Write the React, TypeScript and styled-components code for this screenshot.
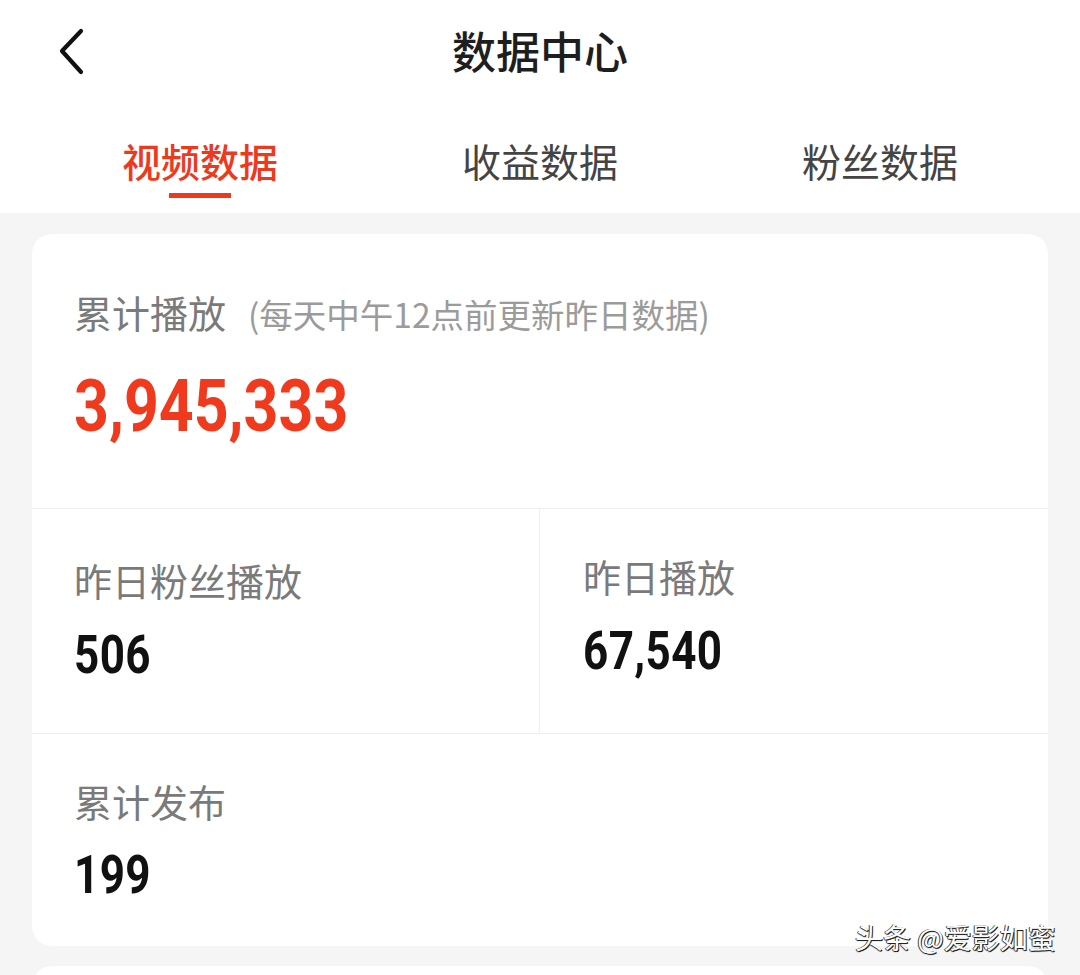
import React from "react";
import styled, { createGlobalStyle } from "styled-components";

const GlobalStyle = createGlobalStyle`
  html, body {
    margin: 0;
    padding: 0;
    background: #f5f5f5;
  }
  body {
    font-family: "Noto Sans CJK SC", "Noto Sans", Roboto, sans-serif;
    -webkit-font-smoothing: antialiased;
  }
`;

const Page = styled.div`
  position: relative;
  width: 1080px;
  height: 975px;
  overflow: hidden;
  background: #f5f5f5;
`;

const Header = styled.header`
  background: #ffffff;
  display: flex;
  flex-direction: column;
`;

const TopBar = styled.div`
  position: relative;
  height: 100px;
  display: flex;
  align-items: center;
  justify-content: center;
`;

const BackButton = styled.button`
  position: absolute;
  left: 52px;
  top: 24px;
  width: 40px;
  height: 54px;
  padding: 0;
  border: 0;
  background: transparent;
  display: flex;
  align-items: center;
  justify-content: center;
`;

const Title = styled.h1`
  margin: 0;
  font-size: 44px;
  line-height: 100px;
  font-weight: 500;
  color: #1e1e1e;
`;

const Tabs = styled.nav`
  display: grid;
  grid-template-columns: repeat(3, 340px);
  padding: 40px 30px 15px;
`;

const Tab = styled.div<{ $active?: boolean }>`
  display: flex;
  flex-direction: column;
  align-items: center;
  font-size: 39px;
  line-height: 40px;
  font-weight: ${(p) => (p.$active ? 500 : 400)};
  color: ${(p) => (p.$active ? "#ec3a1e" : "#444444")};

  &::after {
    content: "";
    display: block;
    margin-top: 13px;
    width: 62px;
    height: 5px;
    background: ${(p) => (p.$active ? "#ec3a1e" : "transparent")};
  }
`;

const Content = styled.main`
  display: flex;
  flex-direction: column;
  gap: 20px;
  padding: 21px 32px 0;
`;

const Card = styled.section`
  background: #ffffff;
  border-radius: 20px;
  display: flex;
  flex-direction: column;
`;

const Section = styled.div<{ $top: number; $height: number }>`
  height: ${(p) => p.$height}px;
  padding: ${(p) => p.$top}px 42px 0;
  box-sizing: border-box;
  border-bottom: 1px solid #efefef;
  &:last-child {
    border-bottom: 0;
  }
`;

const Row = styled.div`
  display: grid;
  grid-template-columns: 508px 1fr;
  border-bottom: 1px solid #efefef;
`;

const Cell = styled.div<{ $top: number; $left: number; $divider?: boolean }>`
  height: 224px;
  box-sizing: border-box;
  padding: ${(p) => p.$top}px 0 0 ${(p) => p.$left}px;
  border-right: ${(p) => (p.$divider ? "1px solid #efefef" : "0")};
`;

const Label = styled.div`
  display: flex;
  align-items: baseline;
  gap: 22px;
  font-size: 38px;
  line-height: 40px;
  color: #7a7a7a;
  white-space: nowrap;
`;

const Note = styled.span`
  font-size: 33.5px;
  color: #9b9b9b;
`;

const Value = styled.div<{ $big?: boolean; $gap: number }>`
  margin-top: ${(p) => p.$gap}px;
  font-family: Roboto, "Liberation Sans", sans-serif;
  font-weight: 700;
  font-size: ${(p) => (p.$big ? 72 : 53)}px;
  line-height: ${(p) => (p.$big ? 72 : 53)}px;
  color: ${(p) => (p.$big ? "#ef3a1d" : "#111111")};
  letter-spacing: ${(p) => (p.$big ? 0 : 0.5)}px;
  transform: scaleX(${(p) => (p.$big ? 0.845 : 0.83)});
  transform-origin: left center;
  white-space: nowrap;
`;

const NextCard = styled.div`
  height: 40px;
  background: #ffffff;
  border-radius: 20px 20px 0 0;
`;

const Watermark = styled.div`
  position: absolute;
  left: 855px;
  top: 917px;
  font-size: 28px;
  line-height: 40px;
  color: #ffffff;
  text-shadow: 1px 1px 0 #222, -1px 0 0 #444, 0 1px 1px #333;
  white-space: nowrap;
`;

const ChevronLeft = () => (
  <svg width="32" height="50" viewBox="0 0 32 50" fill="none">
    <path
      d="M25 5 L6 25 L25 46"
      stroke="#111"
      strokeWidth="4.2"
      strokeLinecap="round"
      strokeLinejoin="round"
    />
  </svg>
);

export default function App() {
  return (
    <Page>
      <GlobalStyle />
      <Header>
        <TopBar>
          <BackButton aria-label="返回">
            <ChevronLeft />
          </BackButton>
          <Title>数据中心</Title>
        </TopBar>
        <Tabs>
          <Tab $active>视频数据</Tab>
          <Tab>收益数据</Tab>
          <Tab>粉丝数据</Tab>
        </Tabs>
      </Header>
      <Content>
        <Card>
          <Section $top={58} $height={275}>
            <Label>
              累计播放<Note>(每天中午12点前更新昨日数据)</Note>
            </Label>
            <Value $big $gap={37}>3,945,333</Value>
          </Section>
          <Row>
            <Cell $top={51} $left={42} $divider>
              <Label>昨日粉丝播放</Label>
              <Value $gap={29}>506</Value>
            </Cell>
            <Cell $top={47} $left={43}>
              <Label>昨日播放</Label>
              <Value $gap={29}>67,540</Value>
            </Cell>
          </Row>
          <Section $top={47} $height={212}>
            <Label>累计发布</Label>
            <Value $gap={28}>199</Value>
          </Section>
        </Card>
        <NextCard />
      </Content>
      <Watermark>头条 @爱影如蜜</Watermark>
    </Page>
  );
}
